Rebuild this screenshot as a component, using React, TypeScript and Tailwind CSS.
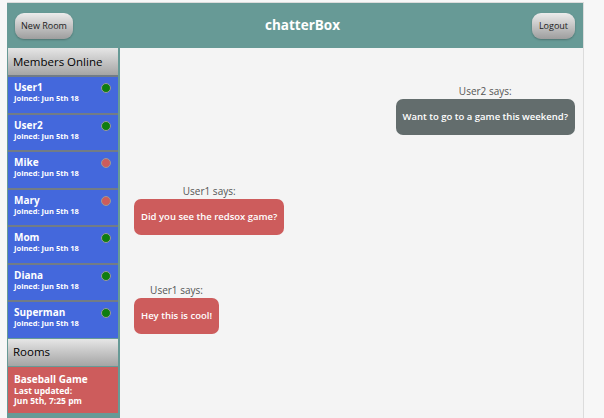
import React from "react"

const members = [
  { name: "User1", online: true },
  { name: "User2", online: true },
  { name: "Mike", online: false },
  { name: "Mary", online: false },
  { name: "Mom", online: true },
  { name: "Diana", online: true },
  { name: "Superman", online: true },
]

const btn =
  "rounded-[9px] bg-gradient-to-b from-[#ececec] to-[#9e9e9e] text-[9px] text-[#222] shadow-[0_1px_2px_rgba(0,0,0,0.25)]"

const sideHead =
  "flex items-center h-[27px] px-[5px] bg-gradient-to-b from-[#e6e6e6] to-[#a5a5a5] text-[11.5px] text-black"

export default function App() {
  return (
    <div className="w-full h-[418px] bg-[#f7f7f7] pl-[7px] pt-[2px] font-['Open_Sans',sans-serif] overflow-hidden">
      <div className="w-[577px] h-[416px] flex flex-col border-t border-r border-[#dcdcdc] bg-[#f4f4f4]">
        <header className="h-[45px] shrink-0 bg-[#679a96] flex items-center justify-between px-[8px]">
          <button className={`${btn} w-[58px] h-[26px]`}>New Room</button>
          <h1 className="text-white font-bold text-[13.5px]">chatterBox</h1>
          <button className={`${btn} w-[43px] h-[26px]`}>Logout</button>
        </header>
        <div className="flex flex-1 min-h-0">
          <aside className="w-[113px] shrink-0 bg-[#679a96] pl-[1px] pr-[2px] flex flex-col">
            <div className={sideHead}>Members Online</div>
            <div className="bg-[#727c86]">
              {members.map((m) => (
                <div
                  key={m.name}
                  className="h-[35.5px] mt-[2px] bg-[#4468dc] pl-[6px] pr-[7px] flex items-start justify-between pt-[5px]"
                >
                  <div className="text-white font-bold leading-none">
                    <div className="text-[10px]">{m.name}</div>
                    <div className="text-[7.5px] mt-[3px]">Joined: Jun 5th 18</div>
                  </div>
                  <span
                    className={`mt-[1px] w-[10px] h-[10px] rounded-full border border-[#9a9a9a] ${
                      m.online ? "bg-[#0f7d0f]" : "bg-[#cd5c5c]"
                    }`}
                  />
                </div>
              ))}
            </div>
            <div className={`${sideHead} mt-[1px]`}>Rooms</div>
            <div className="mt-[1px] h-[46px] bg-[#cd5c5c] px-[6px] pt-[7px] text-white font-bold leading-none">
              <div className="text-[10px]">Baseball Game</div>
              <div className="text-[8.5px] mt-[3px]">Last updated:</div>
              <div className="text-[8.5px] mt-[2px]">Jun 5th, 7:25 pm</div>
            </div>
          </aside>
          <main className="flex-1 flex flex-col px-[14px] pt-[38px]">
            <div className="self-end flex flex-col items-center mr-[-6px]">
              <span className="text-[10px] text-[#555] leading-none">User2 says:</span>
              <div className="mt-[3px] bg-[#636d6d] text-white font-semibold text-[9.5px] rounded-[7px] px-[7px] h-[36px] flex items-center">
                Want to go to a game this weekend?
              </div>
            </div>
            <div className="self-start flex flex-col items-center mt-[51px]">
              <span className="text-[10px] text-[#555] leading-none">User1 says:</span>
              <div className="mt-[3px] bg-[#cd5c5c] text-white font-semibold text-[9.5px] rounded-[7px] px-[7px] h-[36px] flex items-center">
                Did you see the redsox game?
              </div>
            </div>
            <div className="self-start flex flex-col items-center mt-[50px]">
              <span className="text-[10px] text-[#555] leading-none">User1 says:</span>
              <div className="mt-[3px] bg-[#cd5c5c] text-white font-semibold text-[9.5px] rounded-[7px] px-[7px] h-[36px] flex items-center">
                Hey this is cool!
              </div>
            </div>
          </main>
        </div>
      </div>
    </div>
  )
}
